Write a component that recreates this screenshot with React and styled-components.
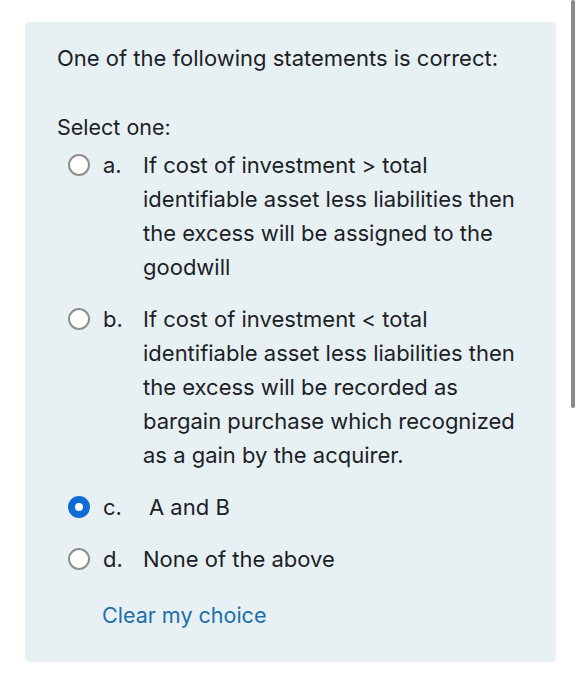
import React from "react";
import styled, { createGlobalStyle } from "styled-components";

const GlobalStyle = createGlobalStyle`
  html, body {
    margin: 0;
    padding: 0;
    background: #ffffff;
  }
  body {
    font-family: Inter, "Noto Sans", "Liberation Sans", sans-serif;
    color: #1d2125;
  }
`;

const options = [
  {
    letter: "a.",
    text: "If cost of investment > total identifiable asset less liabilities then the excess will be assigned to the goodwill",
  },
  {
    letter: "b.",
    text: "If cost of investment < total identifiable asset less liabilities then the excess will be recorded as bargain purchase which recognized as a gain by the acquirer.",
  },
  { letter: "c.", text: "A and B", checked: true, shift: true },
  { letter: "d.", text: "None of the above" },
];

export default function App() {
  return (
    <Page>
      <GlobalStyle />
      <Card>
        <Question>One of the following statements is correct:</Question>
        <Prompt>Select one:</Prompt>
        <Answers>
          {options.map((o) => (
            <Option key={o.letter}>
              <Radio checked={o.checked} />
              <Letter>{o.letter}</Letter>
              <AnswerText shift={o.shift}>{o.text}</AnswerText>
            </Option>
          ))}
        </Answers>
        <ClearLink>Clear my choice</ClearLink>
      </Card>
      <Scrollbar />
    </Page>
  );
}

const Page = styled.div`
  position: relative;
  width: 582px;
  height: 700px;
  padding: 22px 0 0 25px;
  box-sizing: border-box;
`;

const Card = styled.div`
  width: 531px;
  height: 640px;
  box-sizing: border-box;
  background: #e7f1f4;
  border-radius: 4px;
  padding: 19px 34px 0 32px;
  display: flex;
  flex-direction: column;
`;

const Question = styled.div`
  font-size: 22px;
  line-height: 34px;
`;

const Prompt = styled.div`
  font-size: 21.5px;
  line-height: 34px;
  margin-top: 35px;
`;

const Answers = styled.div`
  display: flex;
  flex-direction: column;
  gap: 18px;
  margin-top: 4px;
`;

const Option = styled.div`
  display: flex;
  align-items: flex-start;
  font-size: 22px;
  line-height: 34px;
`;

const Radio = styled.span`
  flex: none;
  width: 22px;
  height: 22px;
  box-sizing: border-box;
  margin: 6px 0 0 11px;
  border-radius: 50%;
  background: #fff;
  border: ${(p) => (p.checked ? "7px solid #0f6cd4" : "2px solid #8e8e8e")};
`;

const Letter = styled.span`
  flex: none;
  width: 40px;
  margin-left: 13px;
`;

const AnswerText = styled.span`
  flex: 1;
  padding-left: ${(p) => (p.shift ? "6px" : "0")};
`;

const ClearLink = styled.a`
  display: block;
  margin: 22px 0 0 45px;
  font-size: 21.5px;
  line-height: 34px;
  color: #1e6eab;
  cursor: pointer;
`;

const Scrollbar = styled.div`
  position: absolute;
  top: 0;
  right: 7px;
  width: 4px;
  height: 408px;
  border-radius: 2px;
  background: #8a8a8a;
`;
